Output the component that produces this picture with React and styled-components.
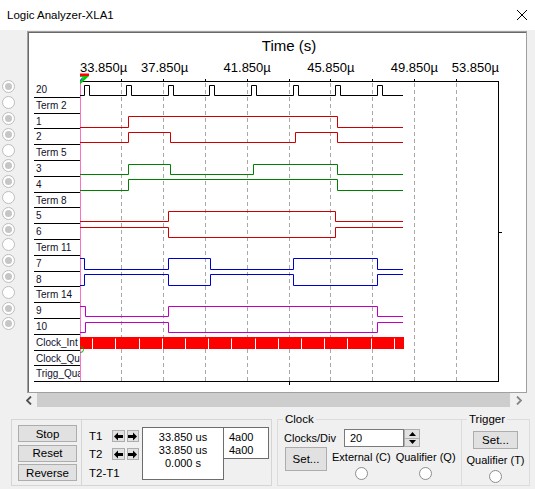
import React from 'react';
import styled, { createGlobalStyle } from 'styled-components';

const ROW_H = 15.8;
const AXIS_TOP = 82;
const PLOT_LEFT = 80;
const AXIS_RIGHT = 498;
const DATA_END = 403;
const GRID_STEP = 41.8;
const SVG_X = 80;
const SVG_Y = 33;

const rows = [
  { label: '20', sig: true },
  { label: 'Term 2' },
  { label: '1', sig: true },
  { label: '2', sig: true },
  { label: 'Term 5' },
  { label: '3', sig: true },
  { label: '4', sig: true },
  { label: 'Term 8' },
  { label: '5', sig: true },
  { label: '6', sig: true },
  { label: 'Term 11' },
  { label: '7', sig: true },
  { label: '8', sig: true },
  { label: 'Term 14' },
  { label: '9', sig: true },
  { label: '10', sig: true },
  { label: 'Clock_Int' },
  { label: 'Clock_Qua' },
  { label: 'Trigg_Qua' },
];

const clockEdges = [];
for (let k = 0; k < 8; k++) {
  clockEdges.push(84.5 + GRID_STEP * k, 89.5 + GRID_STEP * k);
}

const waves = [
  { row: 0, color: '#000000', start: 0, edges: clockEdges },
  { row: 2, color: '#cc0000', start: 0, edges: [128.3, 337.3] },
  { row: 3, color: '#cc0000', start: 0, edges: [128.3, 170.7, 295.3, 337.3] },
  { row: 5, color: '#008000', start: 0, edges: [128.3, 170.7, 253.3, 337.3] },
  { row: 6, color: '#008000', start: 0, edges: [128.3, 337.3] },
  { row: 8, color: '#cc0000', start: 0, edges: [168.3, 335.3] },
  { row: 9, color: '#cc0000', start: 1, edges: [168.3, 335.3] },
  { row: 11, color: '#0000cc', start: 1, edges: [84.7, 168.3, 210.7, 293.3, 377.3] },
  { row: 12, color: '#0000cc', start: 0, edges: [84.7, 168.3, 210.7, 293.3, 377.3] },
  { row: 14, color: '#c000c0', start: 1, edges: [85, 168.3, 377.3] },
  { row: 15, color: '#c000c0', start: 0, edges: [85, 168.3, 377.3] },
];

const timeLabels = [
  { x: 80, text: '33.850µ', anchor: 'start' },
  { x: 164.6, text: '37.850µ', anchor: 'middle' },
  { x: 247.2, text: '41.850µ', anchor: 'middle' },
  { x: 330.8, text: '45.850µ', anchor: 'middle' },
  { x: 414.4, text: '49.850µ', anchor: 'middle' },
  { x: 499, text: '53.850µ', anchor: 'end' },
];

const px = (v) => Math.floor(v) + 0.5;

function wavePath({ row, start, edges }) {
  const top = AXIS_TOP + row * ROW_H;
  const hi = px(top + 3);
  const lo = px(top + 13.5);
  let level = start;
  let d = `M${PLOT_LEFT} ${level ? hi : lo}`;
  edges.forEach((x) => {
    d += ` H${px(x)} V${level ? lo : hi}`;
    level = 1 - level;
  });
  return d + ` H${DATA_END}`;
}

const gridXs = Array.from({ length: 9 }, (_, i) => px(PLOT_LEFT + GRID_STEP * (i + 1)));
const clockTicks = [];
for (let x = 92.7; x < 404; x += 23.2) clockTicks.push(px(x));

const GlobalStyle = createGlobalStyle`
  html, body {
    margin: 0;
    padding: 0;
    background: #f0f0f0;
  }
  body {
    font-family: "Liberation Sans", Arial, sans-serif;
    color: #000;
  }
`;

const Window = styled.div`
  width: 535px;
  height: 489px;
  background: #f0f0f0;
  display: flex;
  flex-direction: column;
  overflow: hidden;
`;

const TitleBar = styled.div`
  flex: none;
  height: 30px;
  background: #ffffff;
  display: flex;
  align-items: center;
  justify-content: space-between;
  padding: 0 8px 0 7px;
  font-size: 11.5px;
`;

const PlotRow = styled.div`
  display: flex;
  margin-top: 1px;
  height: 362px;
`;

const RadioColumn = styled.div`
  width: 27px;
  padding: 48.1px 0 0 2px;
  box-sizing: border-box;
`;

const RadioCell = styled.div`
  height: ${ROW_H}px;
  display: flex;
  align-items: center;
`;

const SideRadio = styled.div`
  width: 13px;
  height: 13px;
  box-sizing: border-box;
  border-radius: 50%;
  border: 1px solid #bdbdbd;
  background: #ffffff;
  display: flex;
  align-items: center;
  justify-content: center;

  &::after {
    content: '';
    width: 7px;
    height: 7px;
    border-radius: 50%;
    background: ${(p) => (p.$on ? '#c6c6c6' : 'transparent')};
  }
`;

const Panel = styled.div`
  width: 500px;
  height: 362px;
  box-sizing: border-box;
  border: 1px solid #a0a0a0;
  box-shadow: inset 1px 1px 0 #696969;
  background: #ffffff;
  display: flex;
  padding: 1px;
`;

const LabelColumn = styled.div`
  width: 51px;
  flex: none;
  padding: ${AXIS_TOP - SVG_Y}px 0 0 5px;
  box-sizing: border-box;
`;

const LabelRow = styled.div`
  height: ${ROW_H}px;
  box-sizing: border-box;
  border-bottom: 1px solid #000;
  padding: 2px 0 0 2px;
  font-size: 10px;
  line-height: 12.8px;
  color: #10102a;
  white-space: nowrap;
  overflow: hidden;
`;

const Chart = styled.svg`
  display: block;
  flex: none;
`;

const Scrollbar = styled.div`
  display: flex;
  height: 15px;
  margin-left: 21px;
  width: 506px;
`;

const ScrollArrow = styled.div`
  width: ${(p) => p.$w}px;
  display: flex;
  align-items: center;
  justify-content: center;
`;

const ScrollTrack = styled.div`
  flex: 1;
  background: #cdcdcd;
  margin-bottom: 1px;
`;

const Controls = styled.div`
  display: flex;
  align-items: flex-start;
  margin: 5px 0 0 11px;
`;

const RunBox = styled.div`
  display: flex;
  margin-top: 6px;
  height: 67px;
  border: 1px solid #d5d5d5;
  box-sizing: border-box;
`;

const ButtonCol = styled.div`
  width: 70px;
  border-right: 1px solid #d5d5d5;
  display: flex;
  flex-direction: column;
  gap: 2.5px;
  padding: 5px 0 0 6px;
  box-sizing: border-box;
`;

const PushButton = styled.button`
  width: ${(p) => p.$w || 59}px;
  height: ${(p) => p.$h || 17}px;
  padding: 0;
  border: 1px solid #adadad;
  background: #e1e1e1;
  font-family: inherit;
  font-size: 11.5px;
  color: #000;
  flex: none;
`;

const CursorPanel = styled.div`
  width: 189px;
  display: flex;
  padding-left: 7px;
  box-sizing: border-box;
`;

const CursorLabels = styled.div`
  display: flex;
  flex-direction: column;
  padding-top: 10px;
  width: 50px;
`;

const CursorRow = styled.div`
  display: flex;
  align-items: center;
  height: ${(p) => p.$h || 12}px;
  margin-top: ${(p) => p.$mt || 0}px;
  gap: 2px;
  font-size: 11.5px;
`;

const CursorName = styled.span`
  width: 22px;
`;

const ArrowBtn = styled.div`
  width: 13px;
  height: 12px;
  box-sizing: border-box;
  border: 1px solid #adadad;
  background: #e1e1e1;
  display: flex;
  align-items: center;
  justify-content: center;
`;

const ValueBox = styled.div`
  margin: 7px 0 0 3px;
  width: 82px;
  height: 53px;
  box-sizing: border-box;
  border: 1px solid #6d6d6d;
  background: #ffffff;
  text-align: center;
  font-size: 11px;
  line-height: 12.8px;
  padding-top: 3px;
`;

const HexBox = styled.div`
  margin-top: 7px;
  width: 45px;
  height: 32px;
  box-sizing: border-box;
  border: 1px solid #6d6d6d;
  border-left: none;
  background: #ffffff;
  font-size: 11px;
  line-height: 12.8px;
  padding: 3px 0 0 5px;
`;

const Group = styled.fieldset`
  margin: 0 0 0 ${(p) => p.$ml || 0}px;
  padding: 0;
  width: ${(p) => p.$w}px;
  height: 73px;
  box-sizing: border-box;
  border: 1px solid #dcdcdc;
  ${(p) => p.$noLeft && 'border-left: none;'}
  min-width: 0;
  font-size: 11px;
`;

const Legend = styled.legend`
  margin-left: 5px;
  padding: 0 2px;
  font-size: 11.5px;
  line-height: 13px;
`;

const ClockTop = styled.div`
  display: flex;
  align-items: center;
  padding-left: 6px;
  margin-top: 3px;
`;

const FieldLabel = styled.span`
  width: 60px;
`;

const NumberInput = styled.div`
  width: 60px;
  height: 18px;
  box-sizing: border-box;
  border: 1px solid #7a7a7a;
  background: #ffffff;
  padding-left: 5px;
  line-height: 16px;
`;

const Spinner = styled.div`
  width: 16px;
  height: 18px;
  display: flex;
  flex-direction: column;
`;

const SpinHalf = styled.div`
  flex: 1;
  border: 1px solid #adadad;
  border-top: ${(p) => (p.$down ? 'none' : '1px solid #adadad')};
  background: #e1e1e1;
  display: flex;
  align-items: center;
  justify-content: center;
`;

const ClockBottom = styled.div`
  display: flex;
  align-items: flex-start;
  padding-left: 7px;
`;

const Option = styled.div`
  display: flex;
  flex-direction: column;
  align-items: center;
  margin-left: ${(p) => p.$ml || 0}px;
  white-space: nowrap;
`;

const OptionText = styled.span`
  line-height: 13px;
  margin-top: ${(p) => p.$mt}px;
`;

const Radio = styled.div`
  width: 13px;
  height: 13px;
  box-sizing: border-box;
  border-radius: 50%;
  border: 1px solid #8e8e8e;
  background: #ffffff;
  margin-top: 3px;
`;

const TriggerBody = styled.div`
  display: flex;
  flex-direction: column;
  align-items: center;
  padding-top: 5px;
`;

const Arrow = ({ dir }) => (
  <svg width="9" height="9" viewBox="0 0 9 9">
    <path
      d="M0 4.5 L4 0.5 V3 H9 V6 H4 V8.5 Z"
      fill="#000"
      transform={dir === 'right' ? 'translate(9 0) scale(-1 1)' : undefined}
    />
  </svg>
);

const Tri = ({ down }) => (
  <svg width="7" height="4" viewBox="0 0 7 4">
    <polygon points={down ? '0,0 7,0 3.5,4' : '0,4 7,4 3.5,0'} fill="#000" />
  </svg>
);

const Chevron = ({ right }) => (
  <svg width="6" height="9" viewBox="0 0 6 9">
    <polyline
      points={right ? '1,0.5 5,4.5 1,8.5' : '5,0.5 1,4.5 5,8.5'}
      fill="none"
      stroke={right ? '#858585' : '#505050'}
      strokeWidth="1.8"
    />
  </svg>
);

const PlotChart = () => (
  <Chart width="445" height="358">
    <g transform={`translate(${-SVG_X} ${-SVG_Y})`} fontFamily='"Liberation Sans", Arial, sans-serif'>
      <text x="289" y="51" fontSize="15" textAnchor="middle" fill="#000">Time (s)</text>
      {timeLabels.map((t) => (
        <text key={t.text} x={t.x} y="72" fontSize="13" textAnchor={t.anchor} fill="#000">
          {t.text}
        </text>
      ))}
      {gridXs.map((x) => (
        <g key={x}>
          <line x1={x} y1="83" x2={x} y2="382" stroke="#a8a8a8" strokeDasharray="4 3" />
          <line x1={x} y1="79" x2={x} y2="82" stroke="#000" />
        </g>
      ))}
      <line x1={PLOT_LEFT} y1="81.5" x2={AXIS_RIGHT + 0.5} y2="81.5" stroke="#000" />
      <line x1={AXIS_RIGHT + 0.5} y1="81" x2={AXIS_RIGHT + 0.5} y2="382" stroke="#000" />
      <line x1={PLOT_LEFT} y1="381.5" x2={AXIS_RIGHT + 1} y2="381.5" stroke="#000" />
      <line x1="289.5" y1="382" x2="289.5" y2="385" stroke="#000" />
      <line x1="499" y1="232.5" x2="502" y2="232.5" stroke="#000" />
      <line x1="80.5" y1="78" x2="80.5" y2="381" stroke="#ff6ec7" />
      {waves.map((w) => (
        <path key={w.row} d={wavePath(w)} fill="none" stroke={w.color} strokeWidth="1" />
      ))}
      <rect x="80" y="337" width="324" height="12" fill="#ff0000" />
      {clockTicks.map((x) => (
        <line key={x} x1={x} y1="338.5" x2={x} y2="349" stroke="#ffffff" />
      ))}
      <circle cx="80.5" cy="349.5" r="3" fill="none" stroke="#00b000" />
      <path d="M77.5 349.5 A3 3 0 0 1 80.5 346.5" fill="none" stroke="#ff0000" />
      <rect x="72" y="73.5" width="17" height="2.5" fill="#ff0000" />
      <polygon points="72,76 89,76 80.5,84" fill="#00cc00" />
      <polygon points="77.5,77 83.5,77 80.5,81" fill="#ffffff" />
      <path d="M78.5 77.5 L80.5 80.5 L82.5 77.5" fill="none" stroke="#0000ff" strokeWidth="0.9" />
    </g>
  </Chart>
);

export default function App() {
  return (
    <>
      <GlobalStyle />
      <Window>
        <TitleBar>
          <span>Logic Analyzer-XLA1</span>
          <svg width="10" height="10" viewBox="0 0 10 10">
            <path d="M0 0 L10 10 M10 0 L0 10" stroke="#000" strokeWidth="1" />
          </svg>
        </TitleBar>

        <PlotRow>
          <RadioColumn>
            {rows.slice(0, 16).map((r, i) => (
              <RadioCell key={i}>
                <SideRadio $on={r.sig} />
              </RadioCell>
            ))}
          </RadioColumn>
          <Panel>
            <LabelColumn>
              {rows.map((r) => (
                <LabelRow key={r.label}>{r.label}</LabelRow>
              ))}
            </LabelColumn>
            <PlotChart />
          </Panel>
        </PlotRow>

        <Scrollbar>
          <ScrollArrow $w={16}>
            <Chevron />
          </ScrollArrow>
          <ScrollTrack />
          <ScrollArrow $w={17}>
            <Chevron right />
          </ScrollArrow>
        </Scrollbar>

        <Controls>
          <RunBox>
            <ButtonCol>
              <PushButton>Stop</PushButton>
              <PushButton>Reset</PushButton>
              <PushButton>Reverse</PushButton>
            </ButtonCol>
            <CursorPanel>
              <CursorLabels>
                <CursorRow>
                  <CursorName>T1</CursorName>
                  <ArrowBtn><Arrow /></ArrowBtn>
                  <ArrowBtn><Arrow dir="right" /></ArrowBtn>
                </CursorRow>
                <CursorRow $mt={6}>
                  <CursorName>T2</CursorName>
                  <ArrowBtn><Arrow /></ArrowBtn>
                  <ArrowBtn><Arrow dir="right" /></ArrowBtn>
                </CursorRow>
                <CursorRow $mt={6} $h={13}>
                  <span>T2-T1</span>
                </CursorRow>
              </CursorLabels>
              <ValueBox>
                <div>33.850 us</div>
                <div>33.850 us</div>
                <div>0.000 s</div>
              </ValueBox>
              <HexBox>
                <div>4a00</div>
                <div>4a00</div>
              </HexBox>
            </CursorPanel>
          </RunBox>

          <Group $w={185} $ml={5}>
            <Legend>Clock</Legend>
            <ClockTop>
              <FieldLabel>Clocks/Div</FieldLabel>
              <NumberInput>20</NumberInput>
              <Spinner>
                <SpinHalf><Tri /></SpinHalf>
                <SpinHalf $down><Tri down /></SpinHalf>
              </Spinner>
            </ClockTop>
            <ClockBottom>
              <PushButton $w={42} $h={24}>Set...</PushButton>
              <Option $ml={5}>
                <OptionText $mt={3.5}>External (C)</OptionText>
                <Radio />
              </Option>
              <Option $ml={5}>
                <OptionText $mt={3.5}>Qualifier (Q)</OptionText>
                <Radio />
              </Option>
            </ClockBottom>
          </Group>

          <Group $w={68} $noLeft>
            <Legend>Trigger</Legend>
            <TriggerBody>
              <PushButton $w={45} $h={18}>Set...</PushButton>
              <Option>
                <OptionText $mt={4.5}>Qualifier (T)</OptionText>
                <Radio />
              </Option>
            </TriggerBody>
          </Group>
        </Controls>
      </Window>
    </>
  );
}
